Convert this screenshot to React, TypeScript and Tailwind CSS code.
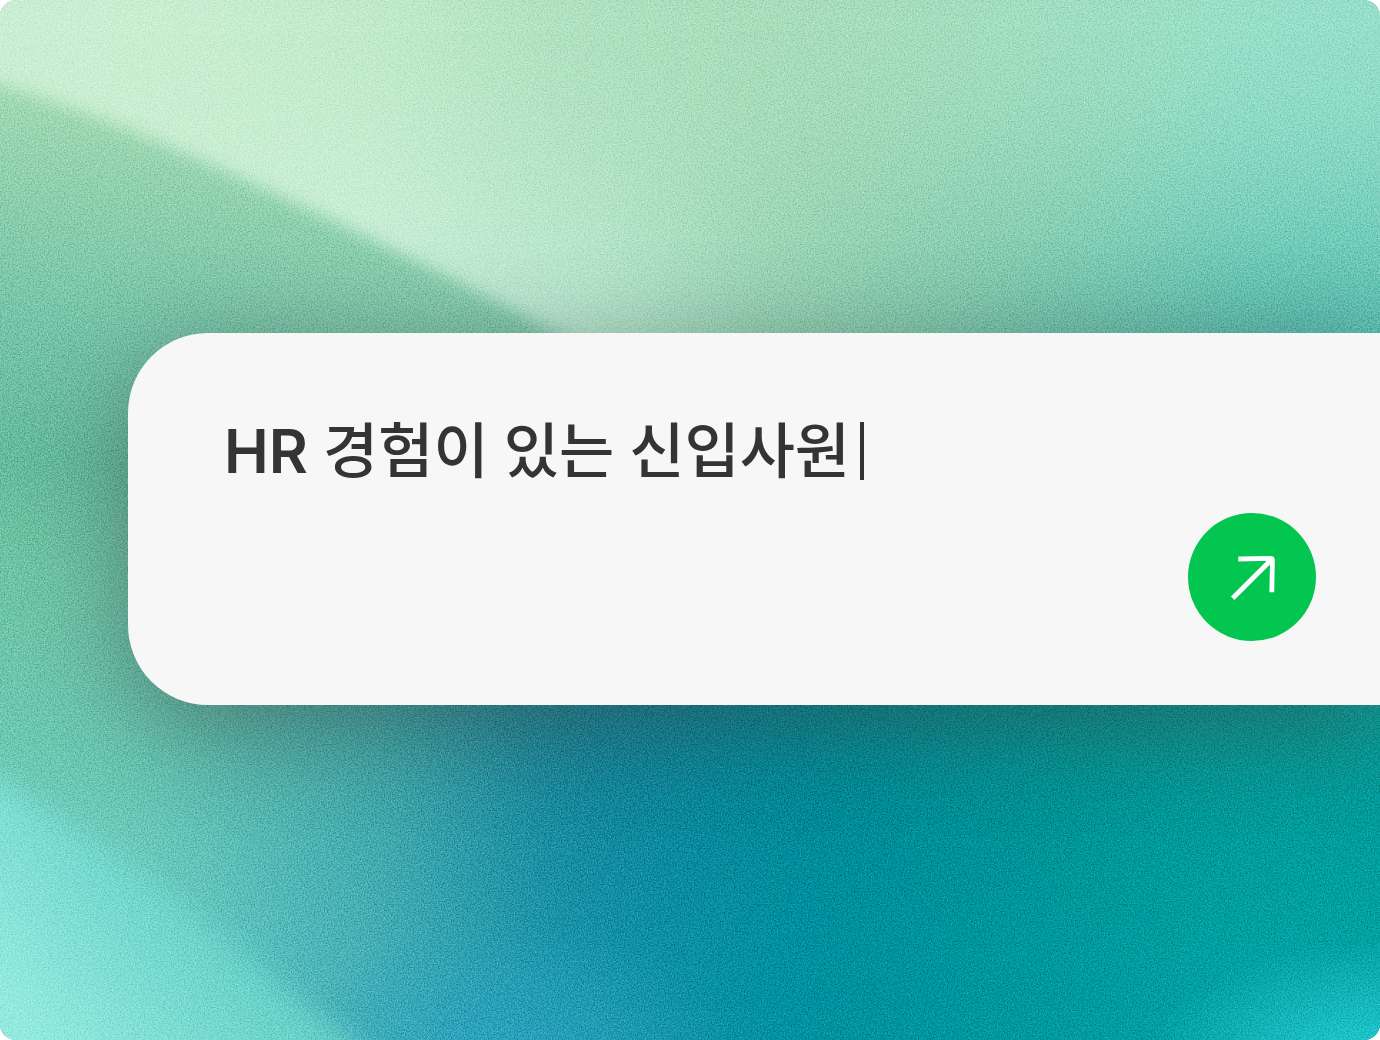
import { FormEvent, useState } from "react";

// Colours of the backdrop, one row per 173px, one column per 230px
const MESH = [
  ["#cbeed3", "#c4eccd", "#b0e1c1", "#a9ddbc", "#a3dfc1", "#98e0ca"],
  ["#cdeed4", "#cff1db", "#bce8ce", "#98d3b2", "#84ccb2", "#6ecbba"],
  ["#6ac0a0", "#c0eadb", "#bcead9", "#84ccb0", "#60bca6", "#40b2a6"],
  ["#70c6a8", "#4caaa0", "#208494", "#108c90", "#14968e", "#18a096"],
  ["#6ac8b4", "#46aeac", "#10849c", "#008898", "#009194", "#009a98"],
  ["#78d8cc", "#4ab4ba", "#1494aa", "#0092a0", "#009a9e", "#04a4a6"],
];

function Backdrop() {
  const rows = [MESH[0], ...MESH, MESH[5]];
  return (
    <svg
      aria-hidden="true"
      className="absolute inset-0 h-full w-full"
      viewBox="0 0 1380 1040"
      preserveAspectRatio="xMidYMid slice"
    >
      <defs>
        <filter id="mesh" x="-20%" y="-20%" width="140%" height="140%" colorInterpolationFilters="sRGB">
          <feGaussianBlur stdDeviation="85" />
        </filter>
        <filter id="edge" x="-20%" y="-20%" width="140%" height="140%" colorInterpolationFilters="sRGB">
          <feGaussianBlur stdDeviation="8" />
        </filter>
        <filter id="softEdge" x="-20%" y="-20%" width="140%" height="140%" colorInterpolationFilters="sRGB">
          <feGaussianBlur stdDeviation="14" />
        </filter>
        <filter id="grain" x="0" y="0" width="100%" height="100%" colorInterpolationFilters="sRGB">
          <feTurbulence type="fractalNoise" baseFrequency="0.7" numOctaves="2" seed="4" />
          <feColorMatrix values="2 0 0 0 -0.5  2 0 0 0 -0.5  2 0 0 0 -0.5  0 0 0 0 1" />
          <feGaussianBlur stdDeviation="0.5" />
        </filter>
        <linearGradient id="shade" gradientUnits="userSpaceOnUse" x1="150" y1="90" x2="90" y2="560">
          <stop offset="0" stopColor="#a6dbb6" />
          <stop offset="0.25" stopColor="#8ed0ae" />
          <stop offset="0.5" stopColor="#78c6ab" />
          <stop offset="0.8" stopColor="#64bb9e" />
          <stop offset="1" stopColor="#64bb9e" stopOpacity="0" />
        </linearGradient>
        <linearGradient id="wave" gradientUnits="userSpaceOnUse" x1="10" y1="990" x2="190" y2="860">
          <stop offset="0" stopColor="#94eade" />
          <stop offset="0.5" stopColor="#7cddd3" />
          <stop offset="1" stopColor="#68d0c8" />
        </linearGradient>
        <radialGradient id="glow">
          <stop offset="0" stopColor="#20cdd2" />
          <stop offset="1" stopColor="#20cdd2" stopOpacity="0" />
        </radialGradient>
        <radialGradient id="deep">
          <stop offset="0" stopColor="#28a4c0" stopOpacity="0.8" />
          <stop offset="1" stopColor="#28a4c0" stopOpacity="0" />
        </radialGradient>
      </defs>
      <g filter="url(#mesh)">
        {rows.map((row, r) =>
          [row[0], ...row, row[5]].map((fill, c) => (
            <rect key={`${r}-${c}`} x={(c - 1) * 230} y={(r - 1) * 173.4} width="231" height="175" fill={fill} />
          )),
        )}
      </g>
      <path
        filter="url(#edge)"
        fill="url(#shade)"
        d="M-40 74 C60 100 140 134 200 160 S440 270 570 340 L700 420 V600 H-40Z"
      />
      <ellipse cx="510" cy="1050" rx="220" ry="130" fill="url(#deep)" />
      <ellipse cx="1390" cy="1060" rx="240" ry="120" fill="url(#glow)" />
      <path
        filter="url(#softEdge)"
        fill="url(#wave)"
        d="M-60 736 C60 820 130 865 190 912 S300 1005 400 1080 V1120 H-60Z"
      />
      <rect
        width="1380"
        height="1040"
        filter="url(#grain)"
        className="opacity-50 mix-blend-soft-light"
      />
    </svg>
  );
}

export default function App() {
  const [query, setQuery] = useState("HR 경험이 있는 신입사원");

  function submit(e: FormEvent) {
    e.preventDefault();
  }

  return (
    <div className="bg-white">
      <main className="relative isolate flex min-h-screen flex-col justify-center overflow-hidden rounded-[16px] pb-0.5 pl-32">
        <Backdrop />
        <form
          onSubmit={submit}
          className="relative flex flex-col gap-[26px] rounded-l-[80px] bg-[#f7f7f7] pt-[82px] pr-16 pb-16 pl-24 shadow-[0_20px_100px_rgba(51,51,51,0.44)]"
        >
          <div className="flex items-center gap-2.5">
            <input
              aria-label="검색어"
              value={query}
              onChange={(e) => setQuery(e.target.value)}
              className="h-[72px] [field-sizing:content] bg-transparent font-['Inter_SemiBold',Inter,'Noto_Sans_CJK_KR',sans-serif] text-[60px] leading-[72px] font-medium text-[#333436] caret-transparent outline-none"
            />
            <span className="h-[58px] w-1 bg-[#333436]" />
          </div>
          <button
            type="submit"
            aria-label="검색"
            className="flex size-32 items-center justify-center self-end rounded-full bg-[#03c651]"
          >
            <svg viewBox="0 0 128 128" className="size-32" fill="none" stroke="#fff" strokeWidth="4.8">
              <path d="M44.7 85.3 84 46" />
              <path d="M50.3 46 82.5 45.4 Q84.4 45.4 84.4 47.3 L83.8 79.2" />
            </svg>
          </button>
        </form>
      </main>
    </div>
  );
}
